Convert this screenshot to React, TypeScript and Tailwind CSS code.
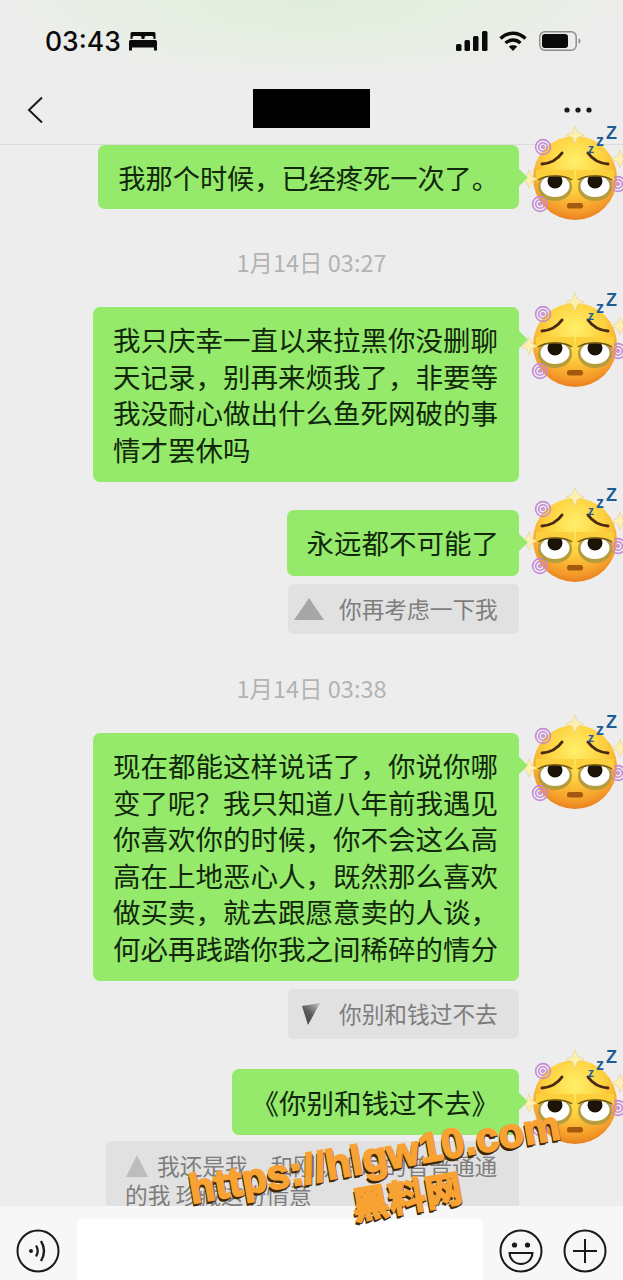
import React from 'react';

const cjk = { fontFamily: '"Noto Sans CJK SC", "Noto Sans", sans-serif' };

const Spiral: React.FC<{ x: number; y: number }> = ({ x, y }) => (
  <g fill="none" stroke="#c58ad6" strokeWidth="1.6">
    <circle cx={x} cy={y} r="7.400" />
    <circle cx={x} cy={y} r="4.300" />
    <circle cx={x} cy={y} r="1.300" />
  </g>
);

const Star: React.FC<{ x: number; y: number }> = ({ x, y }) => (
  <path
    d={`M${x} ${y - 9}L${x + 2.6} ${y - 2.6}L${x + 9} ${y}L${x + 2.6} ${y + 2.6}L${x} ${y + 9}L${x - 2.6} ${y + 2.6}L${x - 9} ${y}L${x - 2.6} ${y - 2.6}Z`}
    fill="#fdf0b0"
    stroke="#e0cf8c"
    strokeWidth="0.6"
  />
);

const Eye: React.FC<{ cx: number }> = ({ cx }) => (
  <g>
    <ellipse cx={cx} cy={61} rx={17} ry={14} fill="#b59c3c" />
    <ellipse cx={cx} cy={60} rx={14.5} ry={11} fill="#ffffff" />
    <circle cx={cx} cy={55} r={7.500} fill="#1d1408" />
    {/* half closed lid */}
    <path
      d={`M${cx - 19} 55C${cx - 10} 48 ${cx + 10} 48 ${cx + 19} 55L${cx + 19} 44L${cx - 19} 44Z`}
      fill="#fbd03c"
    />
    <path d={`M${cx - 17} 54C${cx - 10} 48.500 ${cx + 10} 48.500 ${cx + 17} 54`} fill="none" stroke="#6f5514" strokeWidth="1.500" />
  </g>
);

const DizzyFace: React.FC<{ id: string }> = ({ id }) => (
  <svg viewBox="0 0 100 100" className="block h-[100px] w-[100px] overflow-visible">
    <defs>
      <radialGradient id={id} cx="50%" cy="30%" r="72%">
        <stop offset="0%" stopColor="#fff06a" />
        <stop offset="50%" stopColor="#fdcf3c" />
        <stop offset="85%" stopColor="#f59a2a" />
        <stop offset="100%" stopColor="#e47a1c" />
      </radialGradient>
    </defs>
    <circle cx="52" cy="52" r="42" fill={`url(#${id})`} />
    <Spiral x={20} y={21} />
    <Spiral x={95} y={58} />
    <Spiral x={17} y={78} />
    <Star x={52} y={9} />
    <Star x={97} y={33} />
    <Star x={6} y={53} />
    {/* brows */}
    <path d="M19 38Q32 37 39 27" fill="none" stroke="#4a2a10" strokeWidth="3" strokeLinecap="round" />
    <path d="M65 27Q72 37 85 38" fill="none" stroke="#4a2a10" strokeWidth="3" strokeLinecap="round" />
    <Eye cx={32} />
    <Eye cx={72} />
    <rect x="44" y="77" width="16" height="5.500" rx="2.500" fill="#a3590f" />
    <text x="65" y="27" fontSize="12" fontWeight="700" fill="#1d5c96" fontFamily="'Liberation Sans', sans-serif">z</text>
    <text x="73" y="20" fontSize="16" fontWeight="700" fill="#1d5c96" fontFamily="'Liberation Sans', sans-serif">z</text>
    <text x="83" y="13" fontSize="18" fontWeight="700" fill="#1d5c96" fontFamily="'Liberation Sans', sans-serif">Z</text>
  </svg>
);

interface BubbleProps {
  id: string;
  children: React.ReactNode;
  face: string;
  size?: string;
  pad?: string;
}

const Bubble: React.FC<BubbleProps> = ({ id, children, face, size = 'text-[27.5px]', pad = 'py-[14.5px]' }) => (
  <div className="flex items-start justify-end gap-[4px]">
    <div className={`relative max-w-[426px] rounded-[7px] bg-[#95e96b] px-[20px] leading-[36.6px] text-[#11280c] ${pad} ${size}`}>
      {children}
      <div className="absolute -right-[6px] top-[26px] h-[13px] w-[13px] rotate-45 bg-[#95e96b]" />
    </div>
    <div className={`h-0 w-[100px] shrink-0 ${face}`}>
      <DizzyFace id={id} />
    </div>
  </div>
);

const TimeLabel: React.FC<{ text: string; className: string }> = ({ text, className }) => (
  <div className={`h-[28px] text-center text-[23.5px] leading-[28px] text-[#b3b3b3] ${className}`}>{text}</div>
);

const Quote: React.FC<{ text: string; icon: React.ReactNode }> = ({ text, icon }) => (
  <div className="mt-[8px] flex justify-end pr-[104px]">
    <div className="flex h-[50px] w-[231px] items-center rounded-[6px] bg-[#e1e1e1] pl-[6px] text-[22.7px] text-[#7d7d7d]">
      {icon}
      <span className="whitespace-nowrap">{text}</span>
    </div>
  </div>
);

export default function App() {
  return (
    <div
      className="relative flex h-[1280px] w-[623px] flex-col overflow-hidden bg-[#ededed]"
      style={cjk}
    >
      {/* status bar */}
      <div className="flex h-[78px] shrink-0 items-start justify-between bg-[radial-gradient(ellipse_at_50%_0%,#e1eedb_0%,#e8eee4_45%,#ededed_75%)] pl-[45px] pr-[42px] pt-[24px]">
        <div className="flex items-center gap-[8px]">
          <span className="text-[26.5px] font-medium leading-[34px] text-[#0a0a0a]" style={{ fontFamily: 'Inter, "Liberation Sans", sans-serif' }}>
            03:43
          </span>
          <svg viewBox="0 0 28 20" className="h-[20px] w-[28px]">
            <path d="M3 1h22a1.500 1.500 0 0 1 1.500 1.500V8H24.500V6.500a1.500 1.500 0 0 0-1.500-1.500h-6a1.500 1.500 0 0 0-1.500 1.500V8h-3V6.500a1.500 1.500 0 0 0-1.500-1.500H5a1.500 1.500 0 0 0-1.500 1.500V8H1.500V2.500A1.500 1.500 0 0 1 3 1z" fill="#0a0a0a" />
            <rect x="0" y="9" width="28" height="7.500" rx="1.500" fill="#0a0a0a" />
            <rect x="0" y="16" width="3" height="3.500" fill="#0a0a0a" />
            <rect x="25" y="16" width="3" height="3.500" fill="#0a0a0a" />
          </svg>
        </div>
        <div className="flex items-center gap-[11px] pt-[7px]">
          <svg viewBox="0 0 32 20" className="h-[20px] w-[32px]">
            <rect x="0" y="13" width="5.500" height="7" rx="1.500" fill="#0a0a0a" />
            <rect x="8.500" y="9" width="5.500" height="11" rx="1.500" fill="#0a0a0a" />
            <rect x="17" y="5" width="5.500" height="15" rx="1.500" fill="#0a0a0a" />
            <rect x="26" y="0" width="5.500" height="20" rx="1.500" fill="#0a0a0a" />
          </svg>
          <svg viewBox="0 0 28 20" className="h-[20px] w-[28px]">
            <path d="M1.500 7.500C9 0.500 19 0.500 26.500 7.500" fill="none" stroke="#0a0a0a" strokeWidth="3.400" />
            <path d="M6.500 12C11 8 17 8 21.500 12" fill="none" stroke="#0a0a0a" strokeWidth="3.400" />
            <path d="M14 20L9.800 15.500C12 13.800 16 13.800 18.200 15.500Z" fill="#0a0a0a" />
          </svg>
          <svg viewBox="0 0 42 20" className="ml-[1px] h-[20px] w-[42px]">
            <rect x="0.800" y="0.800" width="36.400" height="18.400" rx="5" fill="none" stroke="#8a8a8a" strokeWidth="1.400" />
            <rect x="3" y="3" width="26" height="14" rx="3" fill="#0a0a0a" />
            <path d="M39.500 7.500C41 8 41.500 9 41.500 10C41.500 11 41 12 39.500 12.500Z" fill="#8a8a8a" />
          </svg>
        </div>
      </div>

      {/* nav */}
      <div className="flex h-[67px] shrink-0 items-start border-b border-[#dcdcdc] pl-[26px] pr-[31px]">
        <svg viewBox="0 0 18 28" className="mt-[18px] h-[28px] w-[18px]">
          <path d="M16 1.500L3 14L16 26.500" fill="none" stroke="#1a1a1a" strokeWidth="2" />
        </svg>
        <div className="ml-[209px] mt-[11px] h-[39px] w-[117px] bg-black" />
        <svg viewBox="0 0 28 6" className="ml-auto mt-[29px] h-[6px] w-[28px]">
          <circle cx="3" cy="3" r="2.600" fill="#1a1a1a" />
          <circle cx="14" cy="3" r="2.600" fill="#1a1a1a" />
          <circle cx="25" cy="3" r="2.600" fill="#1a1a1a" />
        </svg>
      </div>

      {/* messages */}
      <div className="min-h-0 flex-1">
        <Bubble id="f1" face="-mt-[19px]" size="text-[27.2px]" pad="py-[13.5px]">
          我那个时候，已经疼死一次了。
        </Bubble>
        <TimeLabel text="1月14日 03:27" className="mt-[39px] mb-[31px]" />
        <Bubble id="f2" face="-mt-[14px]">
          我只庆幸一直以来拉黑你没删聊天记录，别再来烦我了，非要等我没耐心做出什么鱼死网破的事情才罢休吗
        </Bubble>
        <div className="h-[28px]" />
        <Bubble id="f3" face="-mt-[22px]">
          永远都不可能了
        </Bubble>
        <Quote
          text="你再考虑一下我"
          icon={
            <svg viewBox="0 0 30 24" className="mr-[15px] h-[24px] w-[30px]">
              <path d="M15 1L30 23H0Z" fill="#a6a6a6" />
            </svg>
          }
        />
        <TimeLabel text="1月14日 03:38" className="mt-[40px] mb-[31px]" />
        <Bubble id="f4" face="-mt-[18px]">
          现在都能这样说话了，你说你哪变了呢？我只知道八年前我遇见你喜欢你的时候，你不会这么高高在上地恶心人，既然那么喜欢做买卖，就去跟愿意卖的人谈，何必再践踏你我之间稀碎的情分
        </Bubble>
        <Quote
          text="你别和钱过不去"
          icon={
            <svg viewBox="0 0 30 24" className="mr-[15px] h-[24px] w-[30px]">
              <defs>
                <linearGradient id="q4" x1="0.9" y1="0" x2="0.3" y2="0.9">
                  <stop offset="0%" stopColor="#bdbdbd" />
                  <stop offset="60%" stopColor="#5b5b5b" />
                  <stop offset="100%" stopColor="#4a4a4a" />
                </linearGradient>
              </defs>
              <path d="M8 4L26 1L14 23Z" fill="url(#q4)" />
            </svg>
          }
        />
        <div className="h-[30px]" />
        <Bubble id="f5" face="-mt-[19px]">
          《你别和钱过不去》
        </Bubble>
        <div className="mt-[6px] flex justify-end pr-[104px]">
          <div className="w-[413px] rounded-[6px] bg-[#e1e1e1] px-[19px] pt-[10px] text-[22.7px] leading-[29px] text-[#7d7d7d]">
            <svg viewBox="0 0 24 24" className="mr-[8px] inline-block h-[24px] w-[24px] align-[-3px]">
              <path d="M12 1L23 23H1Z" fill="#bdbdbd" />
            </svg>
            我还是我　和刚认识时的普普通通的我 珍藏这份情意
          </div>
        </div>
      </div>

      {/* input bar */}
      <div className="relative z-10 flex h-[74px] shrink-0 items-start justify-between bg-[#f7f7f7] pl-[16px] pr-[16px] pt-[13px]">
        <svg viewBox="0 0 44 44" className="mt-[10px] h-[44px] w-[44px]">
          <circle cx="22" cy="22" r="20.500" fill="none" stroke="#1a1a1a" strokeWidth="2" />
          <circle cx="15" cy="22" r="2" fill="#1a1a1a" />
          <path d="M20 16.500Q23.500 22 20 27.500" fill="none" stroke="#1a1a1a" strokeWidth="2.200" />
          <path d="M25 12Q31 22 25 32" fill="none" stroke="#1a1a1a" strokeWidth="2.400" />
        </svg>
        <div className="ml-[17px] h-[61px] w-[406px] rounded-t-[6px] bg-white" />
        <div className="ml-[16px] flex gap-[20px]">
          <svg viewBox="0 0 44 44" className="mt-[10px] h-[44px] w-[44px]">
            <circle cx="22" cy="22" r="20.500" fill="none" stroke="#1a1a1a" strokeWidth="2" />
            <circle cx="15.500" cy="16" r="2.600" fill="#1a1a1a" />
            <circle cx="28.500" cy="16" r="2.600" fill="#1a1a1a" />
            <path d="M10.500 24H33.500C33 31 28 35 22 35C16 35 11 31 10.500 24Z" fill="none" stroke="#1a1a1a" strokeWidth="2" />
          </svg>
          <svg viewBox="0 0 44 44" className="mt-[10px] h-[44px] w-[44px]">
            <circle cx="22" cy="22" r="20.500" fill="none" stroke="#1a1a1a" strokeWidth="2" />
            <path d="M22 10V34M10 22H34" fill="none" stroke="#1a1a1a" strokeWidth="2" />
          </svg>
        </div>
      </div>

      {/* watermark */}
      <div
        className="pointer-events-none absolute left-[186px] top-[1134px] z-20 w-[385px] -rotate-[10deg] text-center font-bold leading-[46px] text-[#f7a233] [-webkit-text-stroke:1.8px_#f7a233] [text-shadow:-1px_2px_0_#3f2806,1px_2px_0_#3f2806,-2px_3px_0_#3f2806]"
        style={{ fontFamily: '"Liberation Sans", "Noto Sans CJK SC", sans-serif' }}
      >
        <div className="whitespace-nowrap text-[41.5px]">https://hlgw10.com</div>
        <div className="pl-[50px] text-[37px]">黑料网</div>
      </div>
    </div>
  );
}
